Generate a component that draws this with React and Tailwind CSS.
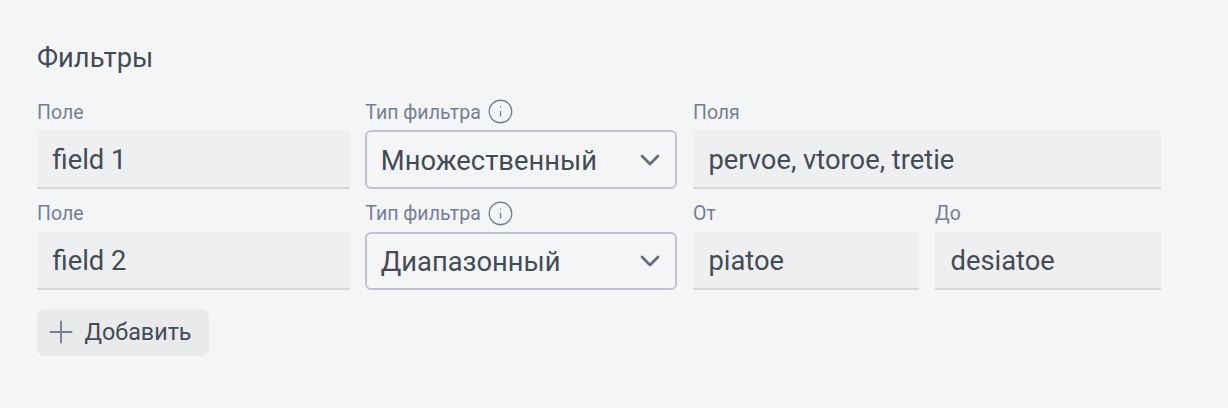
import { ChevronDown, Info, Plus } from "lucide-react";

function Label({ children, info }) {
  return (
    <div className="flex h-[28px] items-center gap-[6px] pb-[7px] text-[19.5px] leading-[24px] text-[#767e96]">
      <span>{children}</span>
      {info && <Info size={27} strokeWidth={1.15} className="-mt-0.5 text-[#767e96]" />}
    </div>
  );
}

function Field({ label, value }) {
  return (
    <div className="min-w-0 flex-1">
      <Label>{label}</Label>
      <div className="flex h-[58.33px] items-center border-b-2 border-[#d5d7dc] bg-[#eeeff1] pt-[3px] pl-[15.5px] text-[27.33px] text-[#444b54] [font-variant-ligatures:common-ligatures] [text-rendering:optimizeLegibility]">
        {value}
      </div>
    </div>
  );
}

function Select({ value }) {
  return (
    <div className="w-[312px] shrink-0">
      <Label info>Тип фильтра</Label>
      <div className="flex h-[58.33px] items-center justify-between rounded-md border-2 border-[#bfc3cd] pr-[9px] pl-[13.5px] text-[27.33px] text-[#444b54]">
        <span className="pt-[3px]">{value}</span>
        <ChevronDown size={32} strokeWidth={2} className="text-[#5f6a7c]" />
      </div>
    </div>
  );
}

export default function App() {
  return (
    <div className="h-[408px] w-[1228px] bg-[#f4f5f7] pt-[42px] pl-[37px] font-['Roboto',sans-serif]">
      <h2 className="text-[27.33px] leading-[32px] text-[#444b54]">Фильтры</h2>
      <div className="mt-[28.4px] flex w-[1124.3px] flex-col gap-[15px]">
        <div className="flex gap-[15.7px]">
          <div className="w-[312.6px] shrink-0"><Field label="Поле" value="field 1" /></div>
          <Select value="Множественный" />
          <Field label="Поля" value="pervoe, vtoroe, tretie" />
        </div>
        <div className="flex gap-[15.7px]">
          <div className="w-[312.6px] shrink-0"><Field label="Поле" value="field 2" /></div>
          <Select value="Диапазонный" />
          <Field label="От" value="piatoe" />
          <Field label="До" value="desiatoe" />
        </div>
      </div>
      <button className="mt-[18.6px] flex h-[47px] w-[172px] items-center gap-[6px] rounded-lg bg-[#e9eaec] pl-[5.5px] text-[23.3px] text-[#444b54]">
        <Plus size={36} strokeWidth={1.25} className="text-[#767e96]" />
        Добавить
      </button>
    </div>
  );
}
